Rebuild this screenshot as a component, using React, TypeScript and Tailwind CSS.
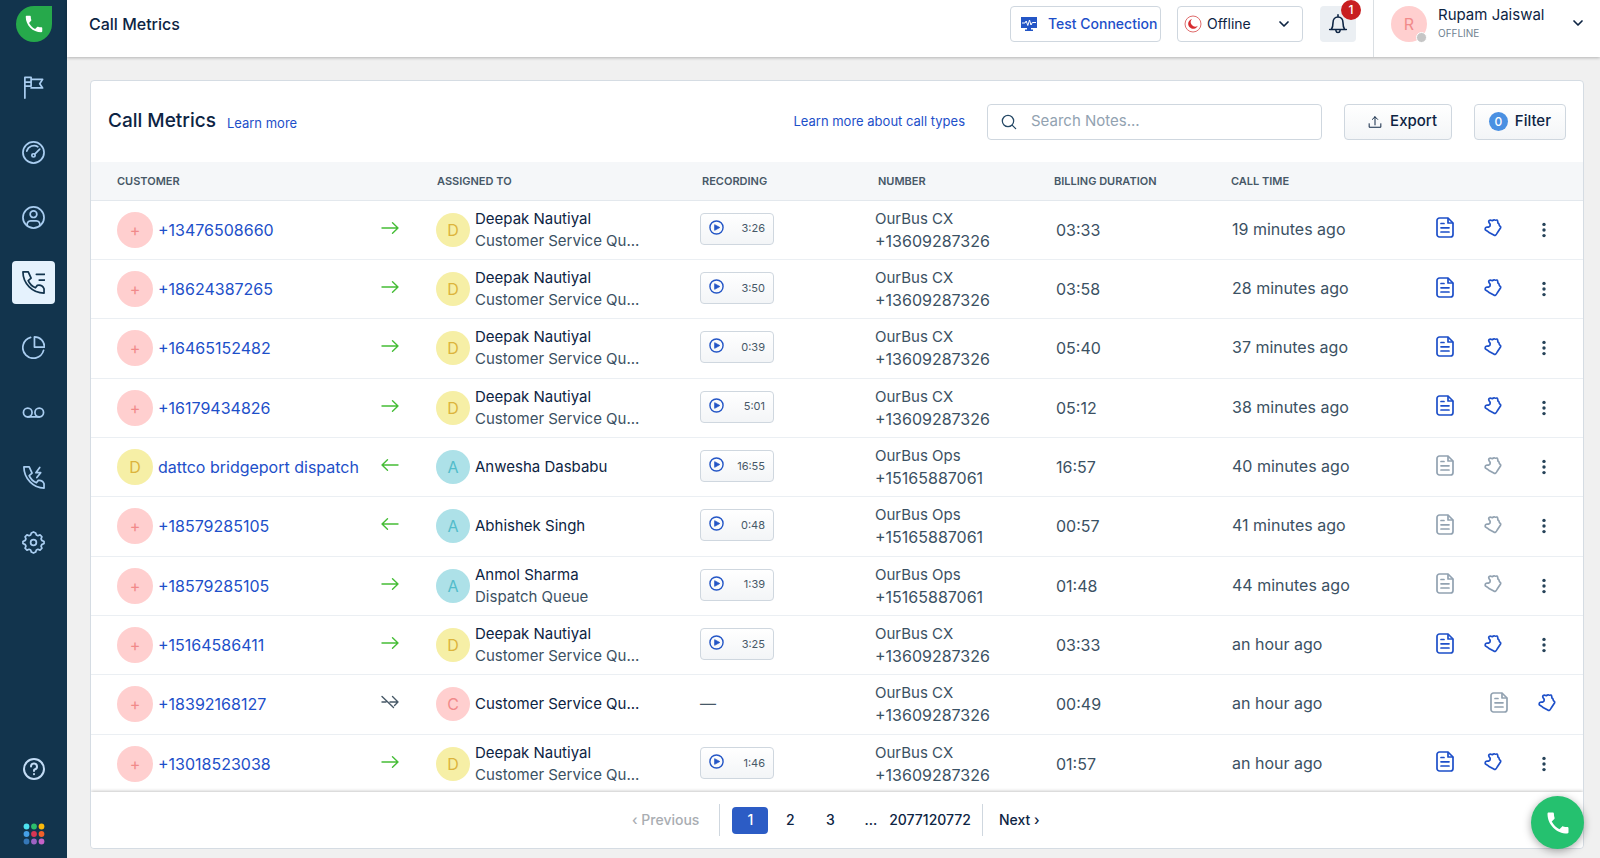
import { useState } from "react";

const calls = [
  { customer: "+13476508660", initial: "+", direction: "out", agent: "Deepak Nautiyal", queue: "Customer Service Qu...", recording: "3:26", line: "OurBus CX", number: "+13609287326", duration: "03:33", time: "19 minutes ago", note: true, tag: true },
  { customer: "+18624387265", initial: "+", direction: "out", agent: "Deepak Nautiyal", queue: "Customer Service Qu...", recording: "3:50", line: "OurBus CX", number: "+13609287326", duration: "03:58", time: "28 minutes ago", note: true, tag: true },
  { customer: "+16465152482", initial: "+", direction: "out", agent: "Deepak Nautiyal", queue: "Customer Service Qu...", recording: "0:39", line: "OurBus CX", number: "+13609287326", duration: "05:40", time: "37 minutes ago", note: true, tag: true },
  { customer: "+16179434826", initial: "+", direction: "out", agent: "Deepak Nautiyal", queue: "Customer Service Qu...", recording: "5:01", line: "OurBus CX", number: "+13609287326", duration: "05:12", time: "38 minutes ago", note: true, tag: true },
  { customer: "dattco bridgeport dispatch", initial: "D", direction: "in", agent: "Anwesha Dasbabu", queue: "", recording: "16:55", line: "OurBus Ops", number: "+15165887061", duration: "16:57", time: "40 minutes ago", note: false, tag: false },
  { customer: "+18579285105", initial: "+", direction: "in", agent: "Abhishek Singh", queue: "", recording: "0:48", line: "OurBus Ops", number: "+15165887061", duration: "00:57", time: "41 minutes ago", note: false, tag: false },
  { customer: "+18579285105", initial: "+", direction: "out", agent: "Anmol Sharma", queue: "Dispatch Queue", recording: "1:39", line: "OurBus Ops", number: "+15165887061", duration: "01:48", time: "44 minutes ago", note: false, tag: false },
  { customer: "+15164586411", initial: "+", direction: "out", agent: "Deepak Nautiyal", queue: "Customer Service Qu...", recording: "3:25", line: "OurBus CX", number: "+13609287326", duration: "03:33", time: "an hour ago", note: true, tag: true },
  { customer: "+18392168127", initial: "+", direction: "missed", agent: "Customer Service Qu...", queue: "", recording: "", line: "OurBus CX", number: "+13609287326", duration: "00:49", time: "an hour ago", note: false, tag: true },
  { customer: "+13018523038", initial: "+", direction: "out", agent: "Deepak Nautiyal", queue: "Customer Service Qu...", recording: "1:46", line: "OurBus CX", number: "+13609287326", duration: "01:57", time: "an hour ago", note: true, tag: true },
];

const avatarColors = {
  "+": "bg-[#ffcfcf] text-[#f18a8a]",
  C: "bg-[#ffcfcf] text-[#f18a8a]",
  R: "bg-[#ffcfcf] text-[#f18a8a]",
  D: "bg-[#f6efa6] text-[#dcb43c]",
  A: "bg-[#ade1e8] text-[#52bccb]",
};

const phonePath =
  "M6.62 10.79c1.44 2.83 3.76 5.14 6.59 6.59l2.2-2.2c.27-.27.67-.36 1.02-.24 1.12.37 2.33.57 3.57.57.55 0 1 .45 1 1V20c0 .55-.45 1-1 1-9.39 0-17-7.61-17-17 0-.55.45-1 1-1h3.5c.55 0 1 .45 1 1 0 1.25.2 2.45.57 3.57.11.35.03.74-.25 1.02l-2.2 2.2z";

function Avatar({ letter, size = "size-9" }) {
  return (
    <span className={`flex ${size} shrink-0 items-center justify-center rounded-full text-base ${avatarColors[letter]}`}>
      {letter}
    </span>
  );
}

function StrokeIcon({ children, className = "size-6", width = 1.6 }) {
  return (
    <svg viewBox="0 0 24 24" className={className} fill="none" stroke="currentColor" strokeWidth={width} strokeLinecap="round" strokeLinejoin="round" aria-hidden="true">
      {children}
    </svg>
  );
}

function Chevron() {
  return (
    <StrokeIcon className="size-3" width={3.4}>
      <path d="M4 8l8 8 8-8" />
    </StrokeIcon>
  );
}

function Direction({ type }) {
  if (type === "missed") {
    return (
      <svg viewBox="0 0 18 14" className="h-[14px] w-[18px] text-[#475867]" fill="none" stroke="currentColor" strokeWidth="1.4" strokeLinecap="round" strokeLinejoin="round" role="img" aria-label="Missed">
        <path d="M1 1.500l11.500 11M1 7h4M9 7h8M11.500 1.500L17 7l-3.500 3.500" />
      </svg>
    );
  }
  return (
    <svg viewBox="0 0 18 14" className="h-[14px] w-[18px] text-[#45bd36]" fill="none" stroke="currentColor" strokeWidth="1.4" strokeLinecap="round" strokeLinejoin="round" role="img" aria-label={type === "in" ? "Incoming" : "Outgoing"}>
      {type === "in" ? <path d="M17 7H1M6.500 1.800L1 7l5.500 5.200" /> : <path d="M1 7h16M11.500 1.800L17 7l-5.500 5.200" />}
    </svg>
  );
}

function NoteIcon() {
  return (
    <svg viewBox="0 0 18 21" className="h-[21px] w-[18px]" fill="none" stroke="currentColor" strokeWidth="1.7" strokeLinecap="round" strokeLinejoin="round" aria-hidden="true">
      <path d="M12 1H3.500A2.500 2.500 0 001 3.500v14A2.500 2.500 0 003.500 20h11a2.500 2.500 0 002.500-2.500V6z" />
      <path d="M12 1.500V6h4.500M5 6.500h3M5 10.800h8M5 15h8" />
    </svg>
  );
}

function TagIcon() {
  return (
    <svg viewBox="0 0 18 19" className="h-[19px] w-[18px]" fill="none" stroke="currentColor" strokeWidth="1.7" strokeLinecap="round" strokeLinejoin="round" aria-hidden="true">
      <path d="M5 2.700q1-.8 2.300-.3l1.200.3q1.200-1.200 2.300-.7l.8.200q1.700-.6 2 .7l.4 2.200q1 .3 1.100 1.400.1 1.200 1 1.700.9.800.4 1.800L13.200 15q-.8 1.700-1.700 2.300-.8.400-1.700-.2L5 14.500q-.8-.9-2.300-1.700-1.800-1-1.600-2.100.2-1.400 1.800-1.500l1.900-.1q1.500-.8 1.400-2.400 0-.9-.8-1.500-1.100-1.400-.4-2.500z" />
    </svg>
  );
}

const navItems = [
  { label: "Getting started", icon: <path d="M3 23V1.500h6.500v9H3M9.500 3.500h12L18.500 8l3 4.500h-12M3 6.500h6.500" /> },
  {
    label: "Dashboard",
    icon: (
      <>
        <circle cx="12" cy="12" r="11" />
        <path d="M5 10.500C6.500 5 13 3.500 16.500 6M13.300 13.700L18.500 8.500" />
        <circle cx="12" cy="15" r="1.700" />
      </>
    ),
  },
  {
    label: "Contacts",
    icon: (
      <>
        <circle cx="12" cy="12" r="11" />
        <circle cx="12" cy="8.500" r="3.500" />
        <path d="M5.500 20.500c-.7-3 1-5 3.500-5h6c2.500 0 4.200 2 3.500 5" />
      </>
    ),
  },
  {
    label: "Call metrics",
    active: true,
    icon: <path d="M1 1h5.500l3 6.500-3 2.500c1.500 3.500 4 6 7.500 7.500l2-2.500q5-1 7 3.500V23C11 23 1 13 1 1zM15 3.500h8.500M18 9.500h5.500" />,
  },
  { label: "Analytics", icon: <path d="M9 1.500a11 11 0 1013.500 13.500M13 1v10.500h10.500C23.500 5.500 19 1 13 1z" /> },
  {
    label: "Voicemail",
    icon: (
      <>
        <circle cx="6" cy="12" r="4.500" />
        <circle cx="18" cy="12" r="4.500" />
        <path d="M6 16.500h12" />
      </>
    ),
  },
  {
    label: "Live calls",
    icon: <path d="M2 1h5.500l3 6.500-3 2.500c1.500 3.500 4 6 7.500 7.500l2-2.500q4.500-.5 6 3.500V23C12 23 2 13 2 1zM18.500 1.500l-4 5.500h5l-4 5" />,
  },
  {
    label: "Settings",
    icon: (
      <>
        <circle cx="12" cy="12" r="3" />
        <path d="M12 1l2.200 1 .8 2.200 1.600.7 2.200-.9 2 2-.9 2.200.7 1.600L23 11v2l-2.400 1.200-.7 1.600.9 2.200-2 2-2.200-.9-1.600.7L14.200 22 12 23l-2.200-1L9 19.800l-1.600-.7-2.200.9-2-2 .9-2.200-.7-1.600L1 13v-2l2.400-1.200.7-1.600L3.200 6l2-2 2.200.9L9 4.200 9.800 2z" />
      </>
    ),
  },
];

const appDots = ["#4de1f0", "#2dbe6c", "#fbb90b", "#45a0e8", "#d93654", "#f0612b", "#3577b8", "#9c62c4", "#c462c8"];

function Sidebar() {
  return (
    <aside className="flex w-[67px] shrink-0 flex-col items-center bg-[#12344d] pt-[6px] pb-3">
      <a href="#home" aria-label="Home" className="flex size-9 items-center justify-center rounded-full rounded-tr-md bg-[#26a94b] text-white">
        <svg viewBox="0 0 24 24" className="size-[22px]" fill="currentColor" aria-hidden="true">
          <path d={phonePath} />
        </svg>
      </a>
      <nav className="mt-6 flex flex-col gap-[22px]">
        {navItems.map((item) => (
          <a
            key={item.label}
            href="#nav"
            aria-label={item.label}
            className={`flex size-[43px] items-center justify-center rounded ${item.active ? "bg-[#e5f2fd] text-[#12344d]" : "text-[#a9cdf0]"}`}
          >
            <StrokeIcon className="size-[23px]" width={1.8}>{item.icon}</StrokeIcon>
          </a>
        ))}
      </nav>
      <button type="button" aria-label="Help" className="mt-auto text-[#c3dcf5]">
        <StrokeIcon className="size-6" width={2}>
          <circle cx="12" cy="12" r="10" />
          <path d="M9 9.500a3 3 0 113.500 2.900q-.5.200-.5 1.600M12 17v.2" />
        </StrokeIcon>
      </button>
      <button type="button" aria-label="Switch app" className="mt-[41px]">
        <svg viewBox="0 0 24 24" className="size-6" aria-hidden="true">
          {appDots.map((color, i) => (
            <circle key={color} cx={4.5 + (i % 3) * 7.5} cy={4.5 + Math.floor(i / 3) * 7.5} r="2.9" fill={color} />
          ))}
        </svg>
      </button>
    </aside>
  );
}

function Header() {
  return (
    <header className="relative flex h-[57px] shrink-0 items-start bg-white pl-[22px] shadow-[0_1px_3px_rgba(0,0,0,0.25)]">
      <div className="mt-3 text-base leading-6 font-medium">Call Metrics</div>
      <div className="mt-[6px] ml-auto flex items-start">
        <button type="button" className="flex h-9 w-[151px] items-center gap-[10px] rounded border border-[#cfd7df] pl-[9px] text-sm font-medium whitespace-nowrap text-[#1d4fc9]">
          <svg viewBox="0 0 18 16" className="h-4 w-[18px] shrink-0" aria-hidden="true">
            <path fill="#2456c6" d="M1 1h16v11h-6v1.500h2V15H5v-1.500h2V12H1z" />
            <path fill="none" stroke="#fff" strokeWidth="1" d="M2 7h3l1.200-2 1.600 4.500L9.500 4l1.500 5 1.300-2.500H16" />
          </svg>
          Test Connection
        </button>
        <div className="relative ml-4 flex h-9 w-[126px] items-center rounded border border-[#cfd7df]">
          <svg viewBox="0 0 18 18" className="ml-[6px] size-[18px]" aria-hidden="true">
            <circle cx="9" cy="9" r="8" fill="none" stroke="#df6c6c" strokeWidth="1" />
            <path fill="#d72d30" d="M8 4a5 5 0 105.800 6.800A4.500 4.500 0 018 4z" />
          </svg>
          <select aria-label="Availability" className="absolute inset-0 appearance-none bg-transparent pl-[29px] text-sm">
            <option>Offline</option>
            <option>Online</option>
          </select>
          <span className="pointer-events-none mr-3 ml-auto">
            <Chevron />
          </span>
        </div>
        <button type="button" aria-label="Notifications" className="relative ml-[17px] flex size-9 items-center justify-center rounded bg-[#ebeff3]">
          <StrokeIcon className="size-5" width={1.9}>
            <path d="M12 1v2M2 18.500h20M4 18.500c1.500-2 2-4 2-8 0-4 2.500-7 6-7s6 3 6 7c0 4 .5 6 2 8M9.500 20c.5 3 4.500 3 5 0" />
          </StrokeIcon>
          <span className="absolute -top-[6px] -right-[5px] flex size-5 items-center justify-center rounded-full bg-[#c81e20] text-xs font-medium text-white">1</span>
        </button>
      </div>
      <div className="ml-[17px] flex h-full w-[227px] items-start border-l border-[#dadfe3] pl-[17px]">
        <div className="relative mt-[6px]">
          <Avatar letter="R" />
          <span className="absolute right-0 -bottom-[1px] size-[11px] rounded-full border border-white bg-[#c6c6c6]" />
        </div>
        <div className="mt-1 ml-[11px]">
          <div className="text-[15px] leading-[22px]">Rupam Jaiswal</div>
          <div className="text-[10px] leading-[14px] text-[#6f8190]">OFFLINE</div>
        </div>
        <button type="button" aria-label="Account menu" className="mt-[17px] mr-4 ml-auto">
          <Chevron />
        </button>
      </div>
    </header>
  );
}

function Toolbar() {
  const [search, setSearch] = useState("");

  return (
    <div className="flex h-[81px] shrink-0 items-center pr-[17px] pl-[17px]">
      <h1 className="text-[19px] font-medium">Call Metrics</h1>
      <a href="#learn" className="mt-1 ml-[11px] text-[13px] text-[#1d4fc9]">Learn more</a>
      <a href="#call-types" className="mr-[22px] ml-auto text-[13px] text-[#1d4fc9]">Learn more about call types</a>
      <label className="flex h-9 w-[335px] items-center rounded border border-[#cfd7df]">
        <StrokeIcon className="ml-[13px] size-4 text-[#264966]" width={1.9}>
          <circle cx="10.5" cy="10.5" r="8.5" />
          <path d="M17 17l5 5" />
        </StrokeIcon>
        <input
          type="text"
          aria-label="Search notes"
          placeholder="Search Notes..."
          value={search}
          onChange={(e) => setSearch(e.target.value)}
          className="ml-[14px] min-w-0 flex-1 text-[15px] outline-none placeholder:text-[#92a2b1]"
        />
      </label>
      <button type="button" className="ml-[22px] flex h-9 w-[108px] items-center justify-end gap-2 rounded border border-[#cfd7df] bg-linear-to-b from-white to-[#f3f5f7] pr-[14px] text-[15px] font-medium">
        <StrokeIcon className="size-[14px]" width={1.7}>
          <path d="M12 17V3M7.500 7.500L12 3l4.500 4.500M2 15v6h20v-6" />
        </StrokeIcon>
        Export
      </button>
      <button type="button" className="ml-[22px] flex h-9 w-[92px] items-center justify-end gap-[7px] rounded border border-[#cfd7df] bg-linear-to-b from-white to-[#f3f5f7] pr-[14px] text-[15px] font-medium">
        <span className="flex size-[19px] items-center justify-center rounded-full bg-[#4a90e2] text-xs text-white">0</span>
        Filter
      </button>
    </div>
  );
}

function CallRow({ call }) {
  return (
    <tr className="h-[59px] border-b border-[#ebeff3]">
      <td className="pl-[26px]">
        <div className="flex items-center gap-[5px]">
          <Avatar letter={call.initial} />
          <a href="#customer" className="text-[#1d4fc9]">{call.customer}</a>
        </div>
      </td>
      <td className="pb-1 pl-4">
        <Direction type={call.direction} />
      </td>
      <td>
        <div className="flex items-center gap-[5px]">
          <Avatar letter={call.agent[0]} size="size-[34px]" />
          <div className="text-[15px] leading-[22px]">
            <div>{call.agent}</div>
            {call.queue && <div className="text-[#3b5163]">{call.queue}</div>}
          </div>
        </div>
      </td>
      <td className="pb-[2px]">
        {call.recording ? (
          <button type="button" className="flex h-8 w-[74px] items-center justify-between rounded border border-[#cfd7df] bg-linear-to-b from-white to-[#f3f5f7] pr-2 pl-2 text-[11px] text-[#475867]">
            <svg viewBox="0 0 16 16" className="mb-[3px] size-[15px] text-[#2456c6]" aria-hidden="true">
              <circle cx="8" cy="8" r="7" fill="none" stroke="currentColor" strokeWidth="1.5" />
              <path d="M6 5l5.500 3L6 11z" fill="currentColor" stroke="currentColor" strokeLinejoin="round" strokeWidth=".8" />
            </svg>
            {call.recording}
          </button>
        ) : (
          <span className="text-[#475867]">—</span>
        )}
      </td>
      <td className="text-[15px] leading-[22px] text-[#3b5163]">
        <div>{call.line}</div>
        <div className="text-base leading-[22px]">{call.number}</div>
      </td>
      <td className="pl-[2px] text-[#3b5163]">{call.duration}</td>
      <td className="pb-[2px] pl-[1px] text-[#3b5163]">{call.time}</td>
      <td>
        <div className={`mb-1 flex items-center justify-end gap-[30px] ${call.recording ? "pr-[37px]" : "pr-[27px]"}`}>
          <button type="button" aria-label="Notes" className={call.note ? "text-[#1d4fc9]" : "text-[#92a2b1]"}>
            <NoteIcon />
          </button>
          <button type="button" aria-label="Tags" className={call.tag ? "text-[#1d4fc9]" : "text-[#92a2b1]"}>
            <TagIcon />
          </button>
          {call.recording && (
            <button type="button" aria-label="More actions" className="mt-1 ml-[10px]">
              <svg viewBox="0 0 4 16" className="h-4 w-1" fill="#264359" aria-hidden="true">
                <circle cx="2" cy="2.400" r="1.700" />
                <circle cx="2" cy="8" r="1.700" />
                <circle cx="2" cy="13.600" r="1.700" />
              </svg>
            </button>
          )}
        </div>
      </td>
    </tr>
  );
}

function CallTable() {
  return (
    <div className="min-h-0 flex-1 overflow-hidden">
      <table className="h-[632px] w-full table-fixed border-collapse text-left text-base">
        <colgroup>
          <col className="w-[274px]" />
          <col className="w-[71px]" />
          <col className="w-[264px]" />
          <col className="w-[175px]" />
          <col className="w-[179px]" />
          <col className="w-[177px]" />
          <col className="w-[176px]" />
          <col className="w-[176px]" />
        </colgroup>
        <thead>
          <tr className="h-[38px] border-b border-[#e3e8ed] bg-[#f5f7f9] text-[11px] text-[#475867]">
            <th className="pl-[26px] font-semibold">CUSTOMER</th>
            <th aria-label="Direction" />
            <th className="pl-[1px] font-semibold">ASSIGNED TO</th>
            <th className="pl-[2px] font-semibold">RECORDING</th>
            <th className="pl-[3px] font-semibold">NUMBER</th>
            <th className="font-semibold">BILLING DURATION</th>
            <th className="font-semibold">CALL TIME</th>
            <th aria-label="Actions" />
          </tr>
        </thead>
        <tbody>
          {calls.map((call, i) => (
            <CallRow key={i} call={call} />
          ))}
        </tbody>
      </table>
    </div>
  );
}

function Pagination() {
  const [page, setPage] = useState(1);

  return (
    <nav aria-label="Pages" className="relative flex h-14 shrink-0 items-center bg-white pl-[541px] text-sm font-medium shadow-[0_-1px_3px_rgba(0,0,0,0.22)]">
      <button type="button" disabled className="text-[#a9adb2]">‹ Previous</button>
      <span className="ml-5 h-8 w-px bg-[#cfd7df]" />
      <div className="ml-3 flex items-center gap-1">
        {[1, 2, 3].map((n) => (
          <button
            key={n}
            type="button"
            onClick={() => setPage(n)}
            className={`h-[27px] w-9 rounded ${page === n ? "bg-[#2c5cc5] text-white" : ""}`}
          >
            {n}
          </button>
        ))}
      </div>
      <span className="ml-4">...</span>
      <button type="button" className="ml-3">20771</button>
      <button type="button">20772</button>
      <span className="ml-[11px] h-8 w-px bg-[#cfd7df]" />
      <button type="button" className="ml-4">Next ›</button>
    </nav>
  );
}

export default function App() {
  return (
    <div className="flex h-screen bg-[#f0f0f0] font-['Inter','Liberation_Sans',sans-serif] text-[#0d2443]">
      <Sidebar />
      <div className="flex min-w-0 flex-1 flex-col">
        <Header />
        <main className="flex min-h-0 flex-1 flex-col pt-[23px] pr-4 pb-[9px] pl-[23px]">
          <section className="flex min-h-0 flex-1 flex-col overflow-hidden rounded border border-[#d5dce3] bg-white">
            <Toolbar />
            <CallTable />
            <Pagination />
          </section>
        </main>
      </div>
      <button type="button" aria-label="Open dialer" className="fixed right-4 bottom-[9px] flex size-[53px] items-center justify-center rounded-full bg-[#25c16f] text-white shadow-[0_2px_8px_rgba(0,0,0,0.35)]">
        <svg viewBox="0 0 24 24" className="size-7" fill="currentColor" aria-hidden="true">
          <path d={phonePath} />
        </svg>
      </button>
    </div>
  );
}
